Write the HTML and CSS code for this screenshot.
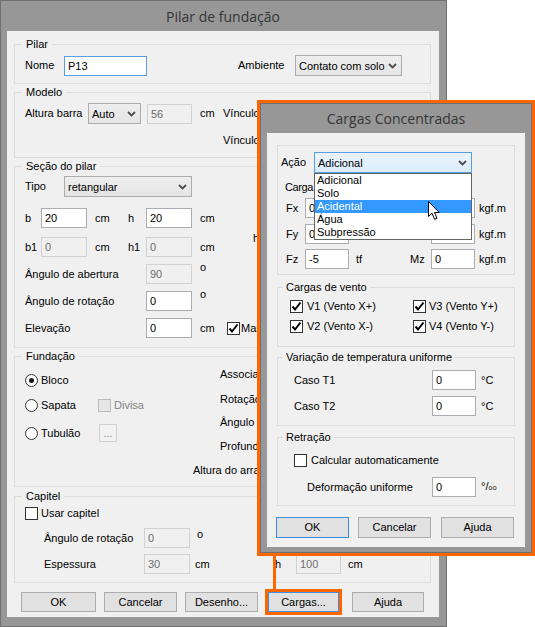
FILE: index.html
```html
<!DOCTYPE html>
<html lang="pt">
<head>
<meta charset="utf-8">
<title>Pilar de fundação</title>
<link rel="stylesheet" href="styles.css">
</head>
<body>
<div class="win main">
  <div class="title">Pilar de fundação</div>
  <div class="client">
    <div class="grp g-pilar">
      <div class="gt">Pilar</div>
      <div class="row h21 mt4">
        <span class="lb ml10 w39">Nome</span>
        <div class="inp focus w83">P13</div>
        <span class="lb ml91 w57">Ambiente</span>
        <div class="sel w107"><span class="st">Contato com solo</span><svg class="chev" width="9" height="6" viewBox="0 0 9 6"><path d="M1 1 L4.5 4.5 L8 1"/></svg></div>
      </div>
    </div>

    <div class="grp g-modelo">
      <div class="gt">Modelo</div>
      <div class="row h21 mt4">
        <span class="lb ml10 w63">Altura barra</span>
        <div class="sel w53"><span class="st">Auto</span><svg class="chev" width="9" height="6" viewBox="0 0 9 6"><path d="M1 1 L4.5 4.5 L8 1"/></svg></div>
        <div class="inp dis w45 ml6">56</div>
        <span class="lb ml8 w23">cm</span>
        <span class="lb">Vínculo</span>
      </div>
      <div class="row h21 mt6">
        <span class="lb ml208">Vínculo</span>
      </div>
    </div>

    <div class="grp g-secao">
      <div class="gt">Seção do pilar</div>
      <div class="row h21 mt3">
        <span class="lb ml10 w39">Tipo</span>
        <div class="sel w128"><span class="st">retangular</span><svg class="chev" width="9" height="6" viewBox="0 0 9 6"><path d="M1 1 L4.5 4.5 L8 1"/></svg></div>
      </div>
      <div class="row h20 mt11">
        <span class="lb ml10 w16">b</span>
        <div class="inp w46">20</div>
        <span class="lb ml8 w33">cm</span>
        <span class="lb w18">h</span>
        <div class="inp w46">20</div>
        <span class="lb ml8">cm</span>
      </div>
      <div class="row h20 mt9">
        <span class="lb ml10 w16">b1</span>
        <div class="inp dis w46">0</div>
        <span class="lb ml8 w33">cm</span>
        <span class="lb w18">h1</span>
        <div class="inp dis w46">0</div>
        <span class="lb ml8 w23">cm</span>
        <span class="lb ml30 hcut">h</span>
      </div>
      <div class="row h20 mt7">
        <span class="lb ml10 w121">Ângulo de abertura</span>
        <div class="inp dis w46">90</div>
        <span class="lb ml8 deg">o</span>
      </div>
      <div class="row h20 mt7">
        <span class="lb ml10 w121">Ângulo de rotação</span>
        <div class="inp w46">0</div>
        <span class="lb ml8 deg">o</span>
      </div>
      <div class="row h20 mt7">
        <span class="lb ml10 w121">Elevação</span>
        <div class="inp w46">0</div>
        <span class="lb ml8 w27">cm</span>
        <span class="cb"><svg width="11" height="11" viewBox="0 0 11 11"><path d="M1.5 5.5 L4 8.5 L9.5 1.5"/></svg></span>
        <span class="lb ml1">Manter</span>
      </div>
    </div>

    <div class="grp g-fund">
      <div class="gt">Fundação</div>
      <div class="fund">
        <div class="fcol">
          <div class="row h13 mt11">
            <span class="radio on"></span>
            <span class="lb ml3">Bloco</span>
          </div>
          <div class="row h13 mt12">
            <span class="radio"></span>
            <span class="lb ml3 w57">Sapata</span>
            <span class="cb dis"></span>
            <span class="lb ml3 gray">Divisa</span>
          </div>
          <div class="row h18 mt12">
            <span class="radio"></span>
            <span class="lb ml3 w58">Tubulão</span>
            <span class="minibtn">...</span>
          </div>
        </div>
        <div class="rcol">
          <div class="rl mt5">Associação</div>
          <div class="rl mt12">Rotação</div>
          <div class="rl mt10">Ângulo</div>
          <div class="rl mt11">Profundidade</div>
          <div class="rl mt11 back">Altura do arranque</div>
        </div>
      </div>
    </div>

    <div class="grp g-cap">
      <div class="gt">Capitel</div>
      <div class="row h13 mt4">
        <span class="cb ml10"></span>
        <span class="lb ml3">Usar capitel</span>
      </div>
      <div class="row h20 mt8">
        <span class="lb ml29 w100">Ângulo de rotação</span>
        <div class="inp dis w46">0</div>
        <span class="lb ml7 deg0">o</span>
      </div>
      <div class="row h20 mt6">
        <span class="lb ml29 w100">Espessura</span>
        <div class="inp dis w46">30</div>
        <span class="lb ml5 w80">cm</span>
        <span class="lb w21">h</span>
        <div class="inp dis w45">100</div>
        <span class="lb ml7">cm</span>
      </div>
    </div>

    <div class="btns">
      <div class="btn w75 ml14">OK</div>
      <div class="btn w73 ml8">Cancelar</div>
      <div class="btn w73 ml8">Desenho...</div>
      <div class="btn def hl w71 ml10">Cargas...</div>
      <div class="btn w72 ml13">Ajuda</div>
    </div>
  </div>
</div>

<div class="connector"></div>

<div class="cc">
  <div class="win inner">
    <div class="title">Cargas Concentradas</div>
    <div class="client cclient">
      <div class="cgrp g1">
        <div class="row h21 mt6">
          <span class="lb ml3 w33">Ação</span>
          <div class="sel blue w158"><span class="st">Adicional</span><svg class="chev" width="9" height="6" viewBox="0 0 9 6"><path d="M1 1 L4.5 4.5 L8 1"/></svg></div>
        </div>
        <div class="row h13 mt8">
          <span class="lb ml7 tight">Carga</span>
        </div>
        <div class="row h20 mt4">
          <span class="lb ml8 w19">Fx</span>
          <div class="inp w44">0</div>
          <span class="lb ml7 w54 hid">tf</span>
          <span class="lb w21 hid">Mx</span>
          <div class="inp w44">0</div>
          <span class="lb ml4">kgf.m</span>
        </div>
        <div class="row h20 mt6">
          <span class="lb ml8 w19">Fy</span>
          <div class="inp w44">0</div>
          <span class="lb ml7 w54 hid">tf</span>
          <span class="lb w21 hid">My</span>
          <div class="inp w44">0</div>
          <span class="lb ml4">kgf.m</span>
        </div>
        <div class="row h20 mt5">
          <span class="lb ml8 w19">Fz</span>
          <div class="inp w44">-5</div>
          <span class="lb ml7 w54">tf</span>
          <span class="lb w21">Mz</span>
          <div class="inp w44">0</div>
          <span class="lb ml4">kgf.m</span>
        </div>
      </div>

      <div class="cgrp g2">
        <div class="cgt">Cargas de vento</div>
        <div class="row h13 mt6">
          <span class="cb ml12"><svg width="11" height="11" viewBox="0 0 11 11"><path d="M1.5 5.5 L4 8.5 L9.5 1.5"/></svg></span>
          <span class="lb ml4 w106">V1 (Vento X+)</span>
          <span class="cb"><svg width="11" height="11" viewBox="0 0 11 11"><path d="M1.5 5.5 L4 8.5 L9.5 1.5"/></svg></span>
          <span class="lb ml3">V3 (Vento Y+)</span>
        </div>
        <div class="row h13 mt7">
          <span class="cb ml12"><svg width="11" height="11" viewBox="0 0 11 11"><path d="M1.5 5.5 L4 8.5 L9.5 1.5"/></svg></span>
          <span class="lb ml4 w106">V2 (Vento X-)</span>
          <span class="cb"><svg width="11" height="11" viewBox="0 0 11 11"><path d="M1.5 5.5 L4 8.5 L9.5 1.5"/></svg></span>
          <span class="lb ml3">V4 (Vento Y-)</span>
        </div>
      </div>

      <div class="cgrp g3">
        <div class="cgt">Variação de temperatura uniforme</div>
        <div class="row h20 mt6">
          <span class="lb ml16 w138">Caso T1</span>
          <div class="inp w44">0</div>
          <span class="lb ml5">°C</span>
        </div>
        <div class="row h20 mt6">
          <span class="lb ml16 w138">Caso T2</span>
          <div class="inp w44">0</div>
          <span class="lb ml5">°C</span>
        </div>
      </div>

      <div class="cgrp g4">
        <div class="cgt">Retração</div>
        <div class="row h13 mt10">
          <span class="cb ml16"></span>
          <span class="lb ml4">Calcular automaticamente</span>
        </div>
        <div class="row h20 mt10">
          <span class="lb ml29 w125">Deformação uniforme</span>
          <div class="inp w44">0</div>
          <span class="lb ml5">°/<span class="oo">oo</span></span>
        </div>
      </div>

      <div class="cbtns">
        <div class="btn def w73 ml9">OK</div>
        <div class="btn w73 ml9">Cancelar</div>
        <div class="btn w73 ml10">Ajuda</div>
      </div>
    </div>
  </div>
</div>

<div class="dropdown">
  <div class="dd-item">Adicional</div>
  <div class="dd-item">Solo</div>
  <div class="dd-item on">Acidental</div>
  <div class="dd-item">Água</div>
  <div class="dd-item">Subpressão</div>
</div>

<svg class="cursor" width="13" height="20" viewBox="0 0 13 20"><path d="M0.5 0.5 L0.5 15.5 L4 12.2 L6.6 18.3 L9 17.3 L6.5 11.5 L11.3 11.5 Z"/></svg>
</body>
</html>
```

FILE: styles.css
```css
* { box-sizing: border-box; }
html, body { margin: 0; padding: 0; }
body {
  width: 535px;
  height: 627px;
  overflow: hidden;
  position: relative;
  background: #fff;
  font-family: "Liberation Sans", Arial, sans-serif;
  font-size: 11px;
  color: #000;
}

/* windows */
.win {
  background: #979797;
  border: 1px solid #707070;
  display: flex;
  flex-direction: column;
}
.main {
  width: 447px;
  height: 627px;
  padding: 0 7px 0 6px;
}
.title {
  flex: none;
  height: 30px;
  display: flex;
  align-items: center;
  justify-content: center;
  font-family: "Open Sans", "Noto Sans", sans-serif;
  font-size: 14px;
  color: #353535;
}
.client {
  flex: none;
  background: #f0f0f0;
}
.main .client {
  width: 432px;
  height: 586px;
  padding-top: 13px;
}

/* group boxes */
.grp {
  border: 1px solid #dcdcdc;
  margin-left: 7px;
  width: 417px;
}
.gt {
  display: table;
  margin: -7px 0 0 7px;
  padding: 0 4px;
  line-height: 13px;
  background: #f0f0f0;
}
.g-pilar { height: 40px; }
.g-modelo { height: 66px; margin-top: 8px; }
.g-secao { height: 182px; margin-top: 8px; }
.g-fund { height: 131px; margin-top: 8px; }
.g-cap { height: 87px; margin-top: 9px; }

/* rows */
.row { display: flex; align-items: center; }
.h13 { height: 13px; }
.h18 { height: 18px; }
.h20 { height: 20px; }
.h21 { height: 21px; }

.mt3 { margin-top: 3px; }
.mt4 { margin-top: 4px; }
.mt5 { margin-top: 5px; }
.mt6 { margin-top: 6px; }
.mt7 { margin-top: 7px; }
.mt8 { margin-top: 8px; }
.mt9 { margin-top: 9px; }
.mt10 { margin-top: 10px; }
.mt11 { margin-top: 11px; }
.mt12 { margin-top: 12px; }

.ml1 { margin-left: 1px; }
.ml3 { margin-left: 3px; }
.ml4 { margin-left: 4px; }
.ml5 { margin-left: 5px; }
.ml6 { margin-left: 6px; }
.ml7 { margin-left: 7px; }
.ml8 { margin-left: 8px; }
.ml9 { margin-left: 9px; }
.ml10 { margin-left: 10px; }
.ml12 { margin-left: 12px; }
.ml13 { margin-left: 13px; }
.ml14 { margin-left: 14px; }
.ml16 { margin-left: 16px; }
.ml29 { margin-left: 29px; }
.ml30 { margin-left: 30px; }
.ml91 { margin-left: 91px; }
.ml208 { margin-left: 208px; }

.w16 { width: 16px; }
.w18 { width: 18px; }
.w19 { width: 19px; }
.w21 { width: 21px; }
.w23 { width: 23px; }
.w27 { width: 27px; }
.w33 { width: 33px; }
.w39 { width: 39px; }
.w44 { width: 44px; }
.w45 { width: 45px; }
.w46 { width: 46px; }
.w53 { width: 53px; }
.w54 { width: 54px; }
.w57 { width: 57px; }
.w58 { width: 58px; }
.w63 { width: 63px; }
.w71 { width: 71px; }
.w72 { width: 72px; }
.w73 { width: 73px; }
.w75 { width: 75px; }
.w80 { width: 80px; }
.w83 { width: 83px; }
.w100 { width: 100px; }
.w106 { width: 106px; }
.w107 { width: 107px; }
.w121 { width: 121px; }
.w125 { width: 125px; }
.w128 { width: 128px; }
.w138 { width: 138px; }
.w158 { width: 158px; }

/* labels */
.lb {
  flex: none;
  white-space: nowrap;
  line-height: 13px;
}
.gray { color: #838383; }
.deg { align-self: flex-start; margin-top: -3px; }
.deg0 { align-self: flex-start; margin-top: 0; }
.hcut { align-self: flex-start; margin-top: -5px; }
.oo { font-size: 7px; letter-spacing: 0.5px; }
.tight { letter-spacing: -0.4px; }
.hid { visibility: hidden; }

/* inputs */
.inp {
  flex: none;
  height: 20px;
  line-height: 18px;
  padding: 0 3px;
  border: 1px solid #abadb3;
  background: #fff;
  white-space: nowrap;
  overflow: hidden;
}
.inp.focus { border-color: #569de5; }
.inp.dis {
  border-color: #d2d2d2;
  background: #f0f0f0;
  color: #6d6d6d;
}

/* combo boxes */
.sel {
  flex: none;
  height: 21px;
  display: flex;
  align-items: center;
  padding: 0 4px 0 3px;
  border: 1px solid #acacac;
  background: linear-gradient(#eeeeee, #e5e5e5);
  white-space: nowrap;
}
.sel.blue {
  border-color: #569de5;
  background: linear-gradient(#ebf4fd, #dbecfc);
}
.st { flex: 1; overflow: hidden; }
.chev { flex: none; }
.chev path { fill: none; stroke: #4d4d4d; stroke-width: 1.8; }

/* checkbox / radio */
.cb {
  flex: none;
  width: 13px;
  height: 13px;
  border: 1px solid #333;
  background: #fff;
  display: flex;
  align-items: center;
  justify-content: center;
}
.cb path { fill: none; stroke: #000; stroke-width: 2; }
.cb.dis { border-color: #bcbcbc; background: #e6e6e6; }
.radio {
  flex: none;
  width: 13px;
  height: 13px;
  border: 1px solid #333;
  border-radius: 50%;
  background: #fff;
  display: flex;
  align-items: center;
  justify-content: center;
}
.radio.on::after {
  content: "";
  width: 5px;
  height: 5px;
  border-radius: 50%;
  background: #1a1a1a;
}
.minibtn {
  flex: none;
  width: 18px;
  height: 18px;
  border: 1px solid #d0d0d0;
  background: #f2f2f2;
  color: #8a8a8a;
  text-align: center;
  line-height: 16px;
}

/* fundação columns */
.fund { display: flex; }
.fcol { flex: none; width: 205px; padding-left: 10px; }
.rcol { flex: none; }
.rl { height: 13px; line-height: 13px; white-space: nowrap; }
.rl.back { margin-left: -27px; }

/* buttons */
.btns { display: flex; margin-top: 9px; }
.btn {
  flex: none;
  height: 20px;
  line-height: 18px;
  text-align: center;
  border: 1px solid #adadad;
  background: #e1e1e1;
  white-space: nowrap;
}
.btn.def { border-color: #3c8fde; }
.btn.hl { outline: 3px solid #ff6600; }

/* orange connector */
.connector {
  position: absolute;
  left: 273px;
  top: 556px;
  width: 3px;
  height: 33px;
  background: #ff6600;
}

/* Cargas Concentradas dialog (overlay) */
.cc {
  position: absolute;
  left: 257px;
  top: 100px;
  width: 278px;
  height: 456px;
  border: 3px solid #ff6600;
}
.inner {
  height: 100%;
  padding: 0 6px 5px 6px;
}
.inner .title { height: 29px; }
.cclient {
  flex: 1;
  padding-top: 12px;
}
.cgrp {
  border: 1px solid #dcdcdc;
  margin-left: 10px;
  width: 238px;
}
.cgt {
  display: table;
  margin: -7px 0 0 5px;
  padding: 0 3px;
  line-height: 13px;
  background: #f0f0f0;
}
.g1 { height: 130px; }
.g2 { height: 60px; margin-top: 12px; }
.g3 { height: 69px; margin-top: 10px; }
.g4 { height: 69px; margin-top: 11px; }
.cbtns { display: flex; margin-top: 11px; }
.cbtns .btn { height: 21px; line-height: 19px; }

/* open combo list (overlay) */
.dropdown {
  position: absolute;
  left: 314px;
  top: 173px;
  width: 158px;
  height: 67px;
  border: 1px solid #646464;
  background: #fff;
}
.dd-item {
  height: 13px;
  line-height: 13px;
  padding-left: 2px;
  white-space: nowrap;
}
.dd-item.on { background: #3399ff; color: #fff; }

.cursor {
  position: absolute;
  left: 428px;
  top: 201px;
}
.cursor path { fill: #fff; stroke: #000; stroke-width: 1; }
```
